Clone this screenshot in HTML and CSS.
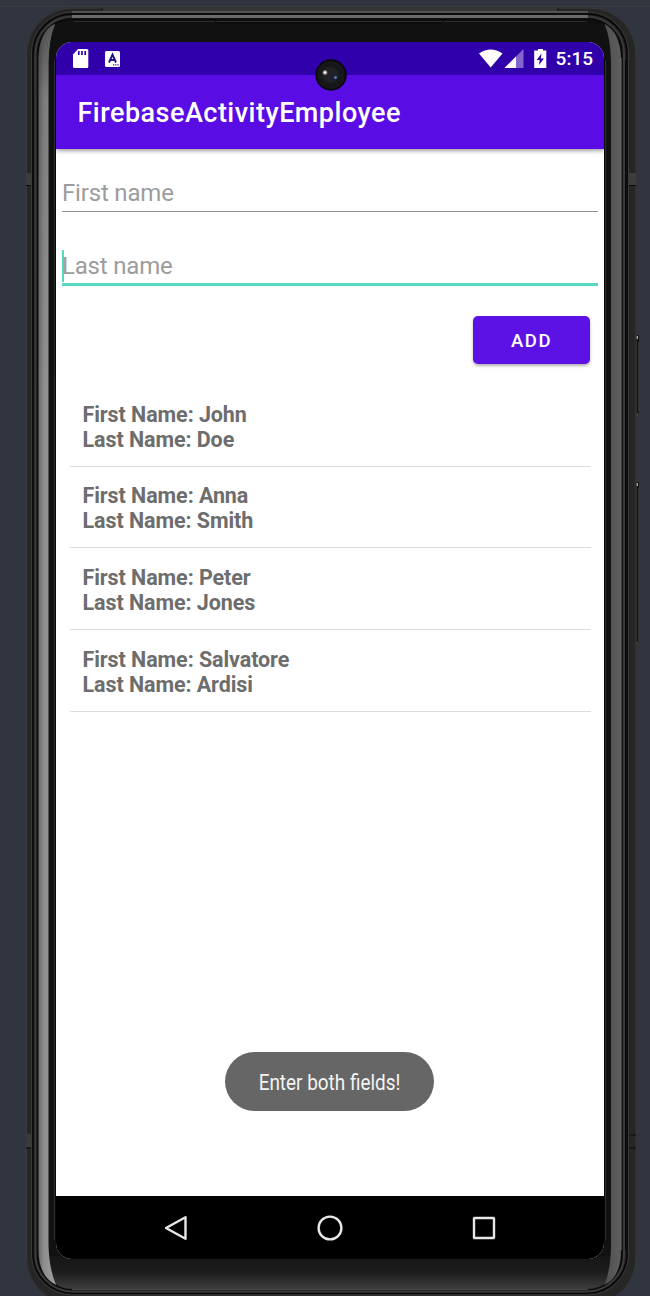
FILE: index.html
```html
<!DOCTYPE html>
<html lang="en">
<head>
<meta charset="utf-8">
<title>FirebaseActivityEmployee</title>
<link rel="stylesheet" href="styles.css">
</head>
<body>
<div class="stage">
  <svg class="device" viewBox="0 0 650 1296" aria-hidden="true">
    <defs>
      <linearGradient id="left" x1="0" x2="1"><stop offset="0" stop-color="#6a6a6a"/><stop offset=".3" stop-color="#8d8d8d"/><stop offset="1" stop-color="#a2a2a2"/></linearGradient>
      <linearGradient id="leftShade" x1="0" x2="0" y1="0" y2="1"><stop offset="0" stop-color="#111" stop-opacity=".5"/><stop offset=".2" stop-color="#111" stop-opacity=".15"/><stop offset="1" stop-color="#111" stop-opacity="0"/></linearGradient>
      <linearGradient id="right" x1="0" x2="1"><stop offset="0" stop-color="#505050"/><stop offset="1" stop-color="#5e5e5e"/></linearGradient>
      <linearGradient id="chin" x1="0" x2="0" y1="0" y2="1"><stop offset="0" stop-color="#161616"/><stop offset=".5" stop-color="#1d1d1d"/><stop offset="1" stop-color="#3d3d3d"/></linearGradient>
      <clipPath id="bezel"><rect x="38.500" y="20" width="582.500" height="1269" rx="34"/></clipPath>
    </defs>
    <path d="M0 6.500H650" stroke="#3a3b3f"/>
    <rect x="634" y="335" width="5" height="81" rx="1" fill="#141414"/>
    <rect x="634" y="482" width="5" height="163" rx="1" fill="#141414"/>
    <path d="M638.500 342V412M638.500 488V642" stroke="#343434"/>
    <rect x="635.500" y="336" width="2.500" height="3" fill="#aaa"/><rect x="635.500" y="483" width="2.500" height="3" fill="#aaa"/>
    <rect x="635" y="413" width="3.500" height="3" fill="#444"/><rect x="635" y="642" width="3.500" height="3" fill="#444"/>
    <rect x="26" y="7.500" width="610.500" height="1297" rx="46" fill="#262626"/>
    <rect x="26.500" y="8" width="609.500" height="1296" rx="45.500" fill="none" stroke="#3c3c3c"/>
    <path d="M102 10H558" stroke="#353535" stroke-width="4"/>
    <path d="M102 8V12M558 8V12" stroke="#111"/>
    <rect x="31.500" y="12" width="597" height="1283" rx="41" fill="#1b1b1b" stroke="#3a3a3a"/>
    <path d="M72 12H588" stroke="#777"/>
    <rect x="33" y="14" width="594" height="1279" rx="39" fill="#222" stroke="#080808" stroke-width="1.500"/>
    <rect x="35.500" y="16.500" width="588.500" height="1275" rx="37" fill="#111" stroke="#3a3a3a" stroke-width="2"/>
    <path d="M72 16.500H588" stroke="#6b6969" stroke-width="3"/>
    <rect x="38" y="19.500" width="583.500" height="1270" rx="34" fill="#111" stroke="#080808"/>
    <path d="M74 21.500H586" stroke="#2c2c2c"/>
    <path d="M215 19V21L218 23H441L445 20" fill="none" stroke="#090909"/>
    <g clip-path="url(#bezel)">
      <rect x="38" y="1256" width="584" height="33" fill="url(#chin)"/>
    </g>
    <path d="M72 1289.500H588" stroke="#454545"/>
    <path d="M38.500 58Q39.500 31 55 24Q49 38 48.500 62V1245Q49 1268 56 1285Q38.500 1276 38.500 1250Z" fill="url(#left)"/>
    <path d="M38.500 58Q39.500 31 55 24Q49 38 48.500 62V400H38.500Z" fill="url(#leftShade)"/>
    <path d="M604.500 24Q620 32 621 58V1250Q621 1277 604.500 1285Q611 1268 611 1245V62Q610.500 38 604.500 24Z" fill="url(#right)"/>
    <path d="M621.500 58V1250" stroke="#414141"/>
    <path d="M54.500 60V1240M605.500 60V1240" stroke="#343838" opacity=".8"/>
    <path d="M55.500 60V1240M604.500 60V1240" stroke="#050505"/>
    <path d="M625.500 60V1250" stroke="#090909"/>
    <rect x="26" y="173" width="5" height="12" fill="#3c3c3c"/><rect x="629" y="173" width="7" height="12" fill="#3c3c3c"/>
    <path d="M26 185.500H31M629 185.500H636M26 1148H31M629 1148H636M629 1135H636" stroke="#0c0c0c"/>
    <rect x="26" y="1134" width="5" height="13" fill="#3b3b3b"/>
  </svg>

  <main class="screen">
    <header class="status">
      <svg class="status-left" viewBox="0 0 52 20" width="52" height="20">
        <path d="M6 0H15Q16.300 0 16.300 1.500V17.500Q16.300 19 14.800 19H2.500Q1 19 1 17.500V5.500Z" fill="#fff"/>
        <path d="M6.800 2V6M10 2V6M13.200 2V6" stroke="#3000aa" stroke-width="1.700"/>
        <rect x="33" y="2" width="15" height="16" rx="1.500" fill="#fff"/>
        <path d="M37 13.500L40.500 5.500L44 13.500M38 11H43" fill="none" stroke="#25108c" stroke-width="1.900"/>
        <path d="M41 15.800H47" stroke="#25108c" stroke-width="1.200" stroke-dasharray="1.200 1"/>
      </svg>
      <svg class="status-right" viewBox="0 0 70 20" width="70" height="20">
        <path d="M0 4.500Q11.700-3.500 23.500 4.500L11.700 18.500Z" fill="#fff"/>
        <path d="M44.500 0V19H25.500Z" fill="#8366cc"/><path d="M37 7.500V19H25.500Z" fill="#fff"/>
        <path d="M59 0H64V1.500H67.300V19H55.200V1.500H59Z" fill="#fff"/>
        <path d="M62.500 4.500L57.700 11H60.700L60 16L65 9.500H61.800Z" fill="#3000aa"/>
      </svg>
      <span class="clock">5:15</span>
      <svg class="camera" viewBox="0 0 32 32">
        <circle cx="16" cy="16" r="15.700" fill="#080808"/><circle cx="16" cy="16" r="14" fill="#171719"/>
        <circle cx="15.500" cy="16" r="8" fill="#202127"/><circle cx="10" cy="13.500" r="2.500" fill="#777477"/><circle cx="10" cy="13.500" r="1.300" fill="#fff"/><circle cx="20.500" cy="18.500" r="1.400" fill="#4b83bd"/>
      </svg>
    </header>
    <div class="appbar"><h1 class="title">FirebaseActivityEmployee</h1></div>
    <section class="content">
      <div class="field"><span>First name</span></div>
      <div class="field focused"><span>Last name</span></div>
      <button class="add">ADD</button>
      <ul class="list">
        <li class="item">First Name: John<br>Last Name: Doe</li>
        <li class="item">First Name: Anna<br>Last Name: Smith</li>
        <li class="item">First Name: Peter<br>Last Name: Jones</li>
        <li class="item">First Name: Salvatore<br>Last Name: Ardisi</li>
      </ul>
      <div class="toast"><span class="toast-text">Enter both fields!</span></div>
    </section>
    <nav class="nav">
      <svg viewBox="0 0 28 28" width="28" height="28"><path d="M23.500 3.200V24.800L4 14Z"/></svg>
      <svg viewBox="0 0 28 28" width="28" height="28"><circle cx="14" cy="14" r="11.400"/></svg>
      <svg viewBox="0 0 28 28" width="28" height="28"><rect x="4" y="4" width="20" height="20" rx=".500"/></svg>
    </nav>
  </main>
</div>
</body>
</html>
```
FILE: styles.css
```css
* { box-sizing: border-box; }
body { margin: 0; background: #313540; font-family: Roboto, sans-serif; }
.stage { position: relative; height: 1296px; padding: 42px 46px 37px 56px; overflow: hidden; }
.device { position: absolute; top: 0; left: 0; width: 650px; height: 1296px; }
.screen { position: relative; display: flex; flex-direction: column; width: 548px; height: 1217px; border-radius: 16px; overflow: hidden; background: #fff; }
.status { position: relative; display: flex; align-items: center; flex: none; height: 32.500px; padding: 1px 11px 0 16px; background: #3000aa; color: #fff; }
.status-right { margin-left: auto; }
.clock { margin-left: 7px; padding-top: 1px; font-size: 19px; font-weight: 500; line-height: 22px; }
.camera { position: absolute; z-index: 2; top: 17px; left: 259px; width: 32px; height: 32px; }
.appbar { display: flex; align-items: center; flex: none; height: 74.500px; padding: 3px 0 0 21.500px; background: #590de4; box-shadow: 0 1px 5px rgba(0,0,0,.5); }
.title { margin: 0; color: #fff; font-size: 27px; font-weight: 500; line-height: 32px; letter-spacing: .480px; }
.content { display: flex; flex-direction: column; flex: 1; padding: 25px 6px 0; }
.field { display: flex; align-items: center; height: 38px; border-bottom: 1.500px solid #929292; color: #9c9c9c; font-size: 24px; letter-spacing: -.180px; }
.focused { height: 38px; margin-top: 36px; border-bottom: 3px solid #56d8c2; }
.focused::before { content: ""; width: 2px; height: 32px; margin: 0 -2px 0 0; background: #56d8c2; }
.focused span { padding-top: 1px; }
.add { align-self: flex-end; width: 117px; height: 48px; margin: 30px 8px 0 0; padding: 2px 0 0; border: 0; border-radius: 5px; background: #5c12e4; box-shadow: 0 2px 3px rgba(0,0,0,.3); color: #fff; font: 500 18.500px Roboto, sans-serif; letter-spacing: 1.600px; }
.list { margin: 21px 7.500px 0; padding: 0; list-style: none; }
.item { height: 81.700px; padding: 16.600px 13px 0; border-bottom: 1.500px solid #ddd; color: #6d6d6d; font-size: 21.500px; font-weight: 700; line-height: 25px; letter-spacing: -.080px; }
.toast { display: flex; align-items: center; justify-content: center; width: 209px; height: 59px; margin: auto 0 85.500px 163px; border-radius: 30px; background: #666; color: #f4f4f4; font-size: 21.500px; }
.toast-text { display: block; padding-top: 2px; white-space: nowrap; transform: scaleX(.88); }
.nav { display: flex; justify-content: space-between; align-items: center; flex: none; height: 63px; padding: 0 106px; background: #000; }
.nav svg { fill: none; stroke: #e7e7e7; stroke-width: 2.400; stroke-linejoin: round; }
```
